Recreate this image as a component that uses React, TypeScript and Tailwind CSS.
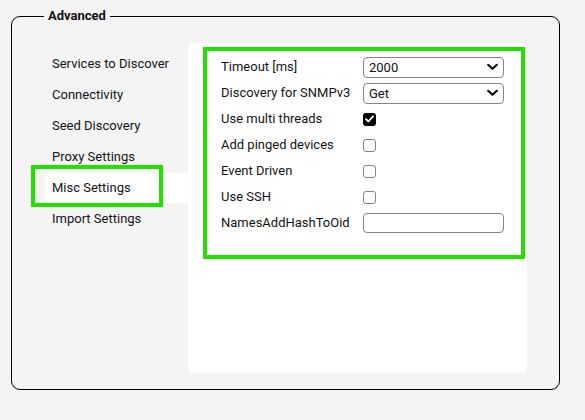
import { useState } from "react";

const menu = [
  "Services to Discover",
  "Connectivity",
  "Seed Discovery",
  "Proxy Settings",
  "Misc Settings",
  "Import Settings",
];

function Chevron() {
  return (
    <svg className="absolute right-[6px] top-1/2 -translate-y-1/2 pointer-events-none" width="11" height="7" viewBox="0 0 11 7">
      <path d="M1.2 1.2 L5.5 5.3 L9.8 1.2" fill="none" stroke="#111" strokeWidth="2.2" strokeLinecap="round" strokeLinejoin="round" />
    </svg>
  );
}

function Select({ value, options }: { value: string; options: string[] }) {
  return (
    <div className="relative w-[141px] h-[21px]">
      <select
        defaultValue={value}
        className="appearance-none w-full h-full rounded-[4px] border border-[#858585] bg-white pl-[5px] text-[13px] text-[#111] outline-none"
      >
        {options.map((o) => (
          <option key={o}>{o}</option>
        ))}
      </select>
      <Chevron />
    </div>
  );
}

function Check({ checked, onClick }: { checked: boolean; onClick: () => void }) {
  return (
    <button
      type="button"
      onClick={onClick}
      className={
        checked
          ? "w-[13px] h-[13px] rounded-[3px] bg-black flex items-center justify-center"
          : "w-[13px] h-[13px] rounded-[3px] border border-[#858585] bg-white"
      }
    >
      {checked && (
        <svg width="9" height="8" viewBox="0 0 9 8">
          <path d="M1 4.2 L3.4 6.5 L8 1.3" fill="none" stroke="#fff" strokeWidth="1.8" strokeLinecap="round" strokeLinejoin="round" />
        </svg>
      )}
    </button>
  );
}

export default function App() {
  const [active, setActive] = useState("Misc Settings");
  const [flags, setFlags] = useState({ multi: true, pinged: false, event: false, ssh: false });
  const toggle = (k: keyof typeof flags) => setFlags({ ...flags, [k]: !flags[k] });

  return (
    <div className="w-full h-screen bg-[#f4f4f4] pt-[8px] font-['Roboto',sans-serif] text-[13px] text-[#141414]">
      <fieldset className="ml-[11px] w-[549px] border border-black rounded-[9px] pt-[19px] pb-[16px] pr-[32px]">
        <legend className="ml-[32px] px-[4px] font-bold leading-[16px] text-[#111]">Advanced</legend>
        <div className="flex">
          {/* Left menu */}
          <div className="w-[176px] pt-[6px] flex flex-col">
            {menu.map((m) => (
              <div key={m} className="relative ml-[33px] h-[31px]">
                <button
                  onClick={() => setActive(m)}
                  className={
                    m === active
                      ? "w-full h-[30px] rounded-l-[5px] bg-white pl-[7px] text-left"
                      : "w-full h-[30px] pl-[7px] text-left"
                  }
                >
                  {m}
                </button>
                {m === active && (
                  <div className="absolute left-[-14px] top-[-8px] w-[132px] h-[42px] border-[4px] border-[#22e000] pointer-events-none" />
                )}
              </div>
            ))}
          </div>

          {/* Content panel */}
          <div className="w-[339px] h-[330px] bg-white rounded-[6px] pl-[15px] pt-[4px]">
            <div className="w-[322px] border-[4px] border-[#22e000] pl-[14px] pt-[3px] pb-[19px]">
              <div className="grid grid-cols-[142px_141px] auto-rows-[26px] items-center">
                <span>Timeout [ms]</span>
                <Select value="2000" options={["1000", "2000", "5000", "10000"]} />

                <span>Discovery for SNMPv3</span>
                <Select value="Get" options={["Get", "GetNext", "GetBulk"]} />

                <span>Use multi threads</span>
                <Check checked={flags.multi} onClick={() => toggle("multi")} />

                <span>Add pinged devices</span>
                <Check checked={flags.pinged} onClick={() => toggle("pinged")} />

                <span>Event Driven</span>
                <Check checked={flags.event} onClick={() => toggle("event")} />

                <span>Use SSH</span>
                <Check checked={flags.ssh} onClick={() => toggle("ssh")} />

                <span>NamesAddHashToOid</span>
                <input
                  type="text"
                  className="w-[141px] h-[20px] rounded-[4px] border border-[#858585] bg-white px-[5px] outline-none"
                />
              </div>
            </div>
          </div>
        </div>
      </fieldset>
    </div>
  );
}
